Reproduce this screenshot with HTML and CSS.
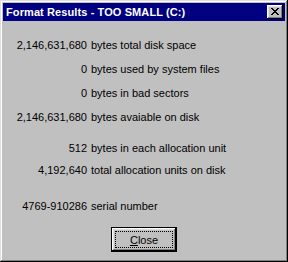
FILE: index.html
```html
<!DOCTYPE html>
<html lang="en">

<head>
    <meta charset="UTF-8">
    <meta name="viewport" content="width=device-width, initial-scale=1.0">
    <title>Format Results</title>
    <link rel="stylesheet" href="styles.css">
</head>

<body>
    <div class="window">
        <div class="titlebar">
            <span class="title">Format Results - TOO SMALL (C:)</span>
            <div class="close-x">
                <svg width="8" height="7" viewBox="0 0 8 7" shape-rendering="crispEdges">
                    <path d="M0 0h2v1h-2zM6 0h2v1h-2zM1 1h2v1h-2zM5 1h2v1h-2zM2 2h4v1h-4zM3 3h2v1h-2zM2 4h4v1h-4zM1 5h2v1h-2zM5 5h2v1h-2zM0 6h2v1h-2zM6 6h2v1h-2z" fill="#000"/>
                </svg>
            </div>
        </div>

        <div class="content">
            <div class="group first">
                <span class="num">2,146,631,680</span><span class="label">bytes total disk space</span>
                <span class="num">0</span><span class="label">bytes used by system files</span>
                <span class="num">0</span><span class="label">bytes in bad sectors</span>
                <span class="num">2,146,631,680</span><span class="label">bytes avaiable on disk</span>
            </div>

            <div class="group second">
                <span class="num">512</span><span class="label">bytes in each allocation unit</span>
                <span class="num">4,192,640</span><span class="label">total allocation units on disk</span>
            </div>

            <div class="group third">
                <span class="num">4769-910286</span><span class="label">serial number</span>
            </div>

            <div class="actions">
                <button class="btn"><span class="focus"><u>C</u>lose</span></button>
            </div>
        </div>
    </div>
</body>
</html>
```

FILE: styles.css
```css
body {
    margin: 0;
    padding: 0;
    background: #c0c0c0;
    font-family: "Liberation Sans", Arial, sans-serif;
    font-size: 11px;
    color: #000;
}

.window {
    width: 288px;
    height: 262px;
    box-sizing: border-box;
    padding: 3px;
    background: #c0c0c0;
    box-shadow: inset -1px -1px #000, inset 1px 1px #dfdfdf, inset -2px -2px #808080, inset 2px 2px #fff;
    display: flex;
    flex-direction: column;
}

.titlebar {
    height: 18px;
    background: #000080;
    display: flex;
    align-items: center;
    justify-content: space-between;
    padding: 0 2px 0 3px;
}

.title {
    color: #fff;
    font-weight: bold;
    font-size: 11px;
    letter-spacing: 0.1px;
}

.close-x {
    width: 16px;
    height: 14px;
    box-sizing: border-box;
    background: #c0c0c0;
    box-shadow: inset -1px -1px #000, inset 1px 1px #fff, inset -2px -2px #808080, inset 2px 2px #dfdfdf;
    display: flex;
    align-items: center;
    justify-content: center;
    padding: 0 1px 1px 0;
}

.close-x svg {
    display: block;
}

.content {
    flex: 1;
    display: flex;
    flex-direction: column;
    padding-top: 12px;
}

.group {
    display: grid;
    grid-template-columns: 84px auto;
    column-gap: 4px;
    white-space: nowrap;
}

.group.first {
    grid-auto-rows: 24px;
    line-height: 24px;
}

.group.second {
    grid-auto-rows: 22px;
    line-height: 22px;
    margin-top: 8px;
}

.group.third {
    grid-auto-rows: 22px;
    line-height: 22px;
    margin-top: 14px;
}

.num {
    text-align: right;
}

.actions {
    display: flex;
    justify-content: center;
    margin-top: 10px;
}

.btn {
    width: 66px;
    height: 25px;
    box-sizing: border-box;
    border: 1px solid #000;
    background: #c0c0c0;
    box-shadow: inset -1px -1px #000, inset 1px 1px #fff, inset -2px -2px #808080, inset 2px 2px #dfdfdf;
    padding: 3px;
    font-family: "Liberation Sans", Arial, sans-serif;
    font-size: 11px;
    color: #000;
    display: flex;
}

.btn .focus {
    flex: 1;
    border: 1px dotted #000;
    display: flex;
    align-items: center;
    justify-content: center;
}
```
